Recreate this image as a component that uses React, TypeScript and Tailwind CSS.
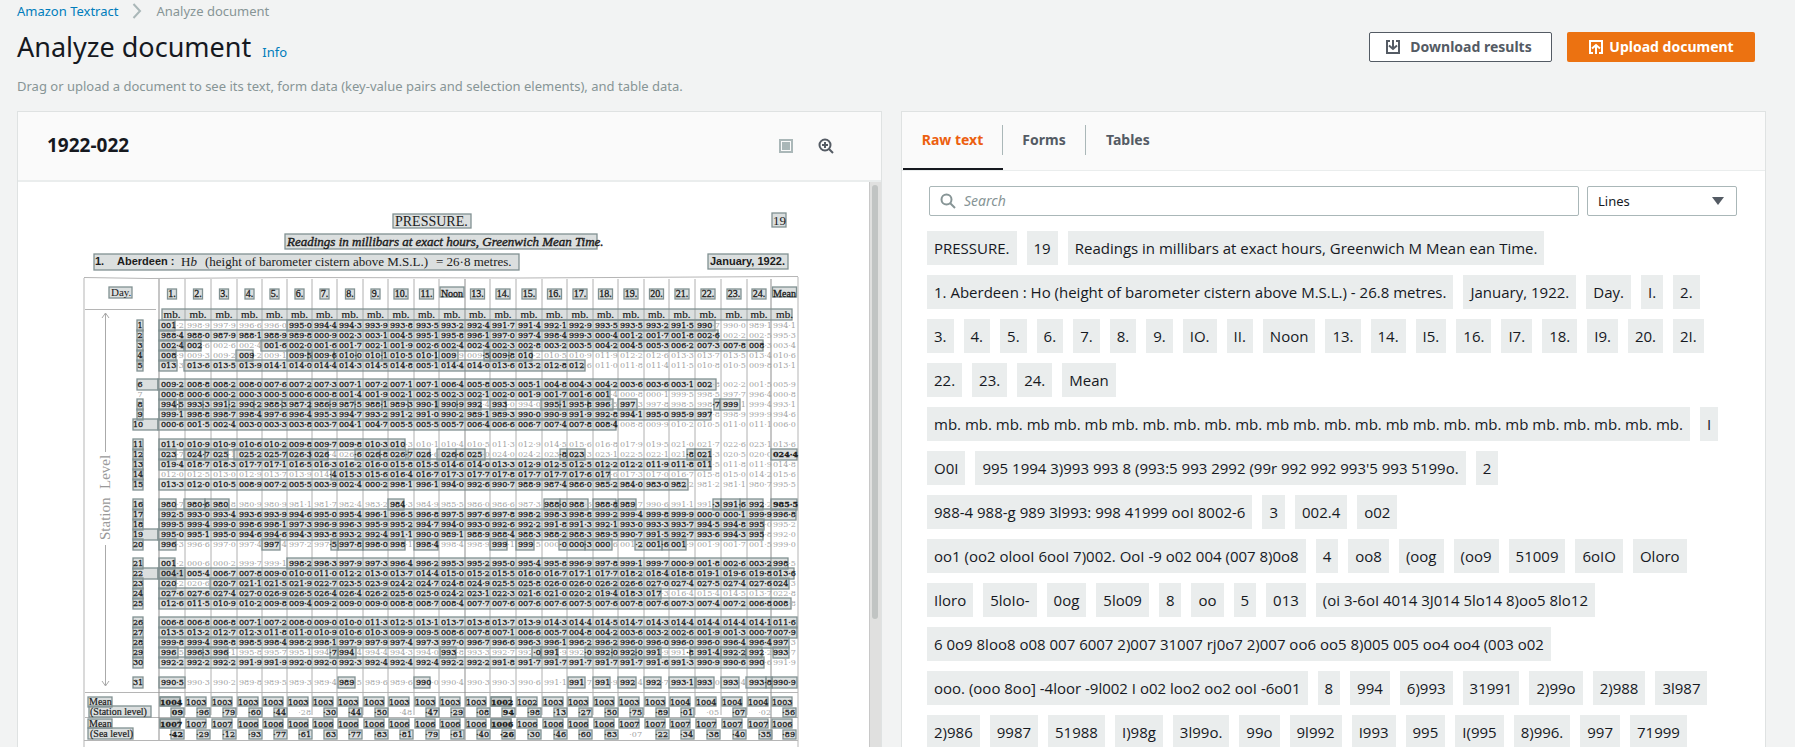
import React from "react";

const COLUMN_LINES = [
  159, 185, 211, 237, 262, 287, 312, 337, 363, 388, 414, 439, 465, 490, 516, 542, 567, 593, 618, 644, 669, 695, 721, 747,
  771, 798,
];

const HEADINGS = [
  "1.", "2.", "3.", "4.", "5.", "6.", "7.", "8.", "9.", "10.", "11.", "Noon", "13.", "14.", "15.", "16.", "17.", "18.",
  "19.", "20.", "21.", "22.", "23.", "24.", "Mean",
];

type Span = [number, number];
type Reading = { y: number; values: string; marks: Span[]; wideDay?: boolean; plainDay?: boolean };

const READINGS: Reading[] = [
  { y: 325, values: "0012 9989 9979 9966 9960 9950 9944 9943 9939 9938 9935 9932 9924 9917 9914 9921 9929 9935 9935 9932 9915 9907 9900 9891 9941", marks: [[159, 175], [287, 715]] },
  { y: 335, values: "9884 9880 9879 9881 9889 9898 0009 0023 0031 0045 9951 9958 9961 9970 9974 9984 9993 0004 0012 0017 0018 0026 0022 0025 9953", marks: [[159, 718]] },
  { y: 345, values: "0024 0026 0026 0024 0016 0020 0016 0017 0021 0019 0026 0024 0024 0023 0028 0032 0035 0042 0045 0053 0062 0073 0078 0083 0034", marks: [[159, 184], [185, 201], [261, 763]] },
  { y: 355, values: "0089 0093 0092 0092 0091 0095 0096 0100 0101 0105 0101 0099 0095 0098 0102 0105 0109 0119 0122 0126 0133 0137 0135 0134 0106", marks: [[159, 176], [236, 253], [287, 308], [308, 312], [312, 334], [334, 356], [356, 382], [382, 436], [439, 458], [484, 490], [490, 509], [509, 532]] },
  { y: 365, values: "0133 0136 0135 0139 0141 0140 0144 0143 0145 0148 0051 0144 0140 0136 0132 0128 0126 0110 0118 0114 0115 0108 0105 0098 0131", marks: [[159, 177], [184, 585]] },
  { y: 384, values: "0092 0088 0082 0080 0076 0072 0073 0071 0072 0071 0071 0064 0058 0053 0051 0048 0043 0042 0036 0036 0031 0028 0022 0015 0059", marks: [[158, 716]], wideDay: true },
  { y: 394, values: "0008 0006 0002 0003 0005 0006 0008 0014 0019 0021 0025 0023 0021 0020 0019 0017 0016 0014 0008 0001 9995 9985 9977 9964 0008", marks: [[159, 610]], plainDay: true },
  { y: 404, values: "9945 9933 9912 9902 9883 9872 9869 9875 9881 9893 9901 9909 9924 9930 9940 9951 9958 9965 9973 9978 9985 9987 9991 9994 9931", marks: [[159, 176], [179, 203], [203, 229], [229, 254], [254, 282], [282, 310], [310, 330], [330, 355], [355, 382], [382, 408], [408, 436], [438, 457], [457, 481], [490, 506], [541, 560], [560, 588], [588, 613], [618, 637], [714, 720], [720, 740]] },
  { y: 414, values: "9991 9988 9987 9984 9976 9964 9953 9947 9932 9912 9910 9902 9891 9893 9900 9909 9919 9928 9941 9950 9959 9978 9989 9999 9946", marks: [[159, 711]] },
  { y: 424, values: "0006 0015 0024 0030 0033 0038 0037 0041 0047 0055 0055 0057 0064 0066 0067 0074 0078 0084 0088 0099 0102 0105 0110 0111 0060", marks: [[158, 616]], wideDay: true },
  { y: 444, values: "0110 0109 0109 0106 0102 0098 0097 0098 0103 0103 0101 0104 0105 0113 0129 0145 0156 0168 0179 0195 0210 0217 0226 0231 0136", marks: [[159, 405]] },
  { y: 454, values: "0237 0247 0251 0252 0257 0263 0264 0266 0268 0267 0266 0266 0250 0240 0242 0238 0233 0231 0225 0221 0218 0213 0205 0200 0244", marks: [[159, 176], [184, 205], [205, 228], [234, 287], [287, 310], [310, 328], [355, 380], [380, 406], [408, 430], [437, 456], [456, 485], [560, 567], [567, 585], [687, 695], [695, 711], [771, 797]] },
  { y: 464, values: "0194 0187 0183 0177 0171 0165 0163 0162 0160 0158 0155 0146 0140 0133 0129 0125 0125 0122 0122 0119 0118 0115 0118 0119 0148", marks: [[159, 711]] },
  { y: 474, values: "0120 0125 0130 0129 0137 0139 0144 0153 0156 0164 0167 0173 0177 0178 0177 0177 0176 0176 0173 0170 0167 0158 0150 0142 0156", marks: [[331, 610]] },
  { y: 484, values: "0133 0120 0105 0089 0072 0055 0039 0024 0002 9981 9961 9940 9926 9907 9889 9874 9860 9852 9840 9830 9822 9812 9811 9807 9955", marks: [[159, 688]] },
  { y: 504, values: "9807 9806 9808 9809 9809 9811 9817 9824 9832 9843 9849 9855 9860 9866 9873 9880 9886 9888 9897 9906 9911 9913 9916 9922 9855", marks: [[159, 176], [184, 205], [205, 229], [388, 404], [544, 560], [560, 588], [593, 616], [618, 636], [713, 721], [721, 740], [740, 763], [771, 797]] },
  { y: 514, values: "9925 9930 9934 9936 9939 9946 9950 9954 9961 9965 9968 9975 9976 9978 9982 9983 9988 9992 9994 9998 9999 0000 0001 9999 9968", marks: [[159, 796]] },
  { y: 524, values: "9995 9994 9990 9986 9981 9973 9969 9963 9959 9952 9947 9940 9930 9926 9922 9918 9913 9921 9930 9933 9937 9945 9948 9950 9952", marks: [[159, 764]] },
  { y: 534, values: "9950 9951 9950 9946 9946 9943 9938 9932 9924 9911 9900 9891 9889 9884 9883 9882 9883 9895 9907 9915 9927 9936 9943 9958 9920", marks: [[158, 763]], wideDay: true },
  { y: 544, values: "9963 9966 9970 9974 9974 9972 9975 9978 9980 9981 9984 9984 9989 9991 9995 0000 0003 0006 0012 0016 0019 0019 0017 0015 9990", marks: [[159, 176], [262, 280], [331, 338], [338, 363], [363, 405], [414, 438], [490, 507], [516, 534], [559, 585], [585, 612], [635, 662], [662, 686]] },
  { y: 563, values: "0012 0006 0002 9997 9991 9982 9983 9979 9973 9964 9962 9953 9952 9950 9954 9958 9969 9978 9991 9997 0009 0018 0026 0032 9985", marks: [[159, 175], [287, 788]] },
  { y: 573, values: "0041 0054 0067 0078 0090 0100 0110 0122 0130 0137 0144 0150 0152 0155 0160 0167 0171 0177 0182 0184 0188 0191 0196 0198 0136", marks: [[158, 794], [159, 185]], wideDay: true },
  { y: 583, values: "0202 0206 0207 0211 0215 0219 0227 0235 0239 0242 0247 0248 0249 0255 0258 0260 0260 0262 0266 0270 0274 0275 0274 0276 0243", marks: [[159, 176], [210, 789]] },
  { y: 593, values: "0276 0276 0274 0270 0269 0265 0264 0264 0262 0256 0250 0242 0231 0223 0216 0210 0202 0194 0183 0173 0164 0154 0145 0137 0228", marks: [[159, 661]] },
  { y: 603, values: "0126 0115 0109 0102 0098 0094 0092 0090 0090 0088 0087 0084 0077 0076 0076 0076 0075 0076 0078 0076 0073 0074 0072 0068 0088", marks: [[159, 791]] },
  { y: 622, values: "0068 0068 0068 0071 0072 0080 0090 0100 0113 0125 0131 0137 0138 0137 0139 0143 0144 0145 0147 0143 0144 0144 0144 0141 0116", marks: [[159, 797]] },
  { y: 632, values: "0135 0132 0127 0123 0118 0110 0109 0106 0103 0099 0095 0086 0078 0071 0066 0057 0048 0042 0036 0032 0026 0019 0013 0007 0079", marks: [[159, 797]] },
  { y: 642, values: "9998 9994 9988 9985 9984 9982 9981 9979 9979 9974 9973 9970 9967 9966 9963 9961 9962 9962 9960 9960 9960 9960 9964 9964 9973", marks: [[159, 789]] },
  { y: 652, values: "9965 9963 9961 9958 9957 9951 9947 9944 9944 9943 9940 9938 9933 9927 9920 9919 9920 9920 9920 9919 9918 9914 9922 9922 9937", marks: [[159, 178], [185, 203], [203, 228], [330, 338], [338, 356], [440, 456], [532, 541], [541, 558], [585, 612], [612, 636], [636, 661], [690, 721], [721, 746], [746, 762], [773, 789]] },
  { y: 662, values: "9922 9922 9922 9919 9919 9920 9920 9923 9924 9924 9924 9922 9922 9918 9917 9917 9917 9917 9917 9916 9913 9909 9906 9906 9919", marks: [[159, 764]] },
  { y: 682, values: "9905 9903 9902 9898 9895 9893 9894 9895 9896 9896 9900 9904 9903 9903 9906 9911 9917 9919 9924 9927 9931 9930 9934 9938 9909", marks: [[159, 185], [338, 355], [414, 430], [568, 585], [593, 610], [618, 636], [644, 661], [669, 695], [696, 714], [721, 739], [746, 766], [766, 772], [772, 797]] },
];

const STATION_MEAN = "1004 1003 1003 1003 1003 1003 1003 1003 1003 1003 1003 1003 1003 1002 1002 1003 1003 1003 1003 1003 1004 1004 1004 1004 1003".split(" ");
const STATION_PART = "09 ·96 ·79 ·60 ·44 ·28 ·30 ·44 ·50 ·48 ·47 ·29 ·08 94 ·98 ·13 ·27 ·50 ·75 ·89 ·01 ·05 ·07 ·02 ·56".split(" ");
const SEA_MEAN = "1007 1007 1007 1006 1006 1006 1006 1006 1006 1006 1006 1006 1006 1006 1006 1006 1006 1006 1007 1007 1007 1007 1007 1007 1006".split(" ");
const SEA_PART = "·42 ·29 ·12 ·93 ·77 ·61 63 ·77 ·83 ·81 ·79 ·61 ·40 ·26 ·30 ·46 ·60 ·83 ·07 ·22 ·34 ·38 ·40 ·35 ·89".split(" ");

const INK = "#1c1c1c";
const FAINT = "#a3a3a3";

function Mark({ x, y, w, h }: { x: number; y: number; w: number; h: number }) {
  return <rect x={x} y={y} width={w} height={h} fill="#879596" fillOpacity="0.3" stroke="#819192" strokeWidth="1.3" />;
}

function ReadingRow({ row, day }: { row: Reading; day: number }) {
  const dayLeft = day < 10 ? 137 : 133;
  const inkAt = (from: number, to: number) => (row.marks.some(([a, b]) => a <= from && b >= to) ? INK : FAINT);
  return (
    <g fontSize="8" strokeWidth="0.3">
      {row.marks.map(([a, b], i) => (
        <Mark key={i} x={a} y={row.y - 5} w={b - a} h={11} />
      ))}
      {!row.plainDay && (
        <Mark x={dayLeft} y={row.y - 5} w={row.wideDay ? 158 - dayLeft : day < 10 ? 6 : 10} h={11} />
      )}
      <text
        x={day < 10 ? 140 : 138}
        y={row.y + 3}
        textAnchor="middle"
        fill={row.plainDay ? FAINT : INK}
        stroke={row.plainDay ? "none" : INK}
      >
        {day}
      </text>
      {row.values.split(" ").map((v, i) => {
        const left = COLUMN_LINES[i];
        const whole = inkAt(left + 8, left + 14);
        const part = inkAt(left + 21, left + 22);
        const bold = i === 24 && (day === 12 || day === 16);
        return (
          <text key={i} x={left + 2} y={row.y + 3} fontWeight={bold ? 700 : 400}>
            <tspan fill={whole} stroke={whole === INK ? INK : "none"}>{v.slice(0, 3)}</tspan>
            <tspan fill={part} stroke={part === INK ? INK : "none"}>·{v.slice(3)}</tspan>
          </text>
        );
      })}
    </g>
  );
}

function MeanRow({ y, top, bottom, skip }: { y: number; top: string[]; bottom: string[]; skip: number[] }) {
  return (
    <g>
      {top.map((v, i) => {
        const left = COLUMN_LINES[i];
        const bold = i === 0 || i === 13;
        const unmarked = skip.includes(i);
        return (
          <g key={i} fontSize="8" fontWeight={bold ? 700 : 400} fill={INK}>
            <Mark x={left + 1} y={y - 5} w={20} h={9} />
            {bold && <Mark x={left + 1} y={y - 5} w={20} h={9} />}
            <text x={left + 1} y={y + 3} stroke={INK} strokeWidth="0.3">{v}</text>
            {!unmarked && <Mark x={left + 12} y={y + 6} w={13} h={9} />}
            <text x={left + 24} y={y + 13} textAnchor="end" fill={unmarked ? FAINT : INK} stroke={unmarked ? "none" : INK} strokeWidth="0.3">
              {bottom[i]}
            </text>
          </g>
        );
      })}
    </g>
  );
}

function ScannedPage() {
  return (
    <svg
      viewBox="18 182 851 565"
      className="block w-full"
      role="img"
      aria-label="Pressure readings, January 1922"
      fontFamily='"DejaVu Serif", serif'
    >
      <g fill="none" stroke="#b5b5b5">
        <path d="M84 277.500 L150 278.500 L300 277.500 L520 278 L798 276.500" />
        <path d="M84 278V747M798 277V747" />
        <path d="M85 309.500H156M85 692.500H798M85 717.500H798M84 740.500H798" />
        {COLUMN_LINES.slice(0, -1).map((x, i) => (
          <path
            key={x}
            d={`M${x} 279V${i === 0 || i === 12 || i === 24 ? 740 : 715}`}
            stroke={i === 0 || i === 12 || i === 24 ? "#8d8d8d" : "#b0b0b0"}
          />
        ))}
        <path d="M105.500 452V313M102 318L105.500 313L109 318M105.500 545V686M102 681L105.500 686L109 681" stroke="#aaa" />
      </g>
      <g fontFamily='"Liberation Serif", serif' fill="#999" fontSize="15">
        <text transform="translate(110 540) rotate(-90)">Station</text>
        <text transform="translate(110 489) rotate(-90)">Level</text>
      </g>
      <g fontFamily='"Liberation Serif", serif' fill={INK}>
        <Mark x={393} y={214} w={78} h={14} />
        <text x="395" y="226" fontSize="14">PRESSURE.</text>
        <Mark x={772} y={213} w={14} h={14} />
        <text x="773" y="225" fontSize="13">19</text>
        <Mark x={285} y={234} w={312} h={15} />
        <text x="287" y="246" fontSize="13" fontStyle="italic" stroke={INK} strokeWidth="0.4">
          Readings in millibars at exact hours, Greenwich Mean Time.
        </text>
        <Mark x={94} y={254} w={425} h={16} />
        <text x="95" y="265" fontSize="11" fontFamily='"Liberation Sans", sans-serif' fontWeight="700">1.</text>
        <text x="117" y="265" fontSize="11" fontFamily='"Liberation Sans", sans-serif' fontWeight="700">Aberdeen :</text>
        <text x="181" y="266" fontSize="13">H<tspan fontStyle="italic">b</tspan></text>
        <text x="205" y="266" fontSize="13">(height of barometer cistern above M.S.L.)</text>
        <text x="436" y="266" fontSize="13">= 26·8 metres.</text>
        <Mark x={708} y={254} w={80} h={15} />
        <text x="710" y="265" fontSize="11" fontFamily='"Liberation Sans", sans-serif' fontWeight="700">January, 1922.</text>
        <Mark x={109} y={287} w={23} h={11} />
        <text x="111" y="296" fontSize="11">Day.</text>
      </g>
      {HEADINGS.map((h, i) => {
        const mid = (COLUMN_LINES[i] + COLUMN_LINES[i + 1]) / 2;
        const w = h.length === 2 ? 9 : h.length === 3 ? 14 : 24;
        return (
          <g key={h} fill={INK}>
            <Mark x={mid - w / 2} y={i === 11 || i === 24 ? 287 : 289} w={w} h={10} />
            <text
              x={mid}
              y="297"
              fontSize="10"
              fontFamily='"Liberation Serif", serif'
              stroke={INK}
              strokeWidth="0.3"
              textAnchor="middle"
            >
              {h}
            </text>
          </g>
        );
      })}
      <Mark x={162} y={309} w={630} h={11} />
      <g fontFamily='"Liberation Serif", serif' fontSize="11" fill={INK} stroke={INK} strokeWidth="0.2" textAnchor="middle">
        {HEADINGS.map((h, i) => (
          <text key={h} x={(COLUMN_LINES[i] + COLUMN_LINES[i + 1]) / 2} y="318">
            mb.
          </text>
        ))}
      </g>
      {READINGS.map((row, i) => (
        <ReadingRow key={row.y} row={row} day={i + 1} />
      ))}
      <MeanRow y={702} top={STATION_MEAN} bottom={STATION_PART} skip={[5, 9, 21, 23]} />
      <MeanRow y={724} top={SEA_MEAN} bottom={SEA_PART} skip={[18]} />
      <g fontFamily='"Liberation Serif", serif' fontSize="10" fill={INK} stroke={INK} strokeWidth="0.2">
        <Mark x={88} y={697} w={24} h={10} />
        <text x="89" y="705">Mean</text>
        <Mark x={89} y={706} w={62} h={11} />
        <text x="90" y="715">(Station level)</text>
        <Mark x={88} y={719} w={24} h={9} />
        <text x="89" y="727">Mean</text>
        <Mark x={88} y={728} w={45} h={11} />
        <text x="90" y="737">(Sea level)</text>
      </g>
    </svg>
  );
}

const LINES: string[][] = [
  ["PRESSURE.", "19", "Readings in millibars at exact hours, Greenwich M Mean ean Time."],
  ["1. Aberdeen : Ho (height of barometer cistern above M.S.L.) - 26.8 metres.", "January, 1922.", "Day.", "I.", "2."],
  ["3.", "4.", "5.", "6.", "7.", "8.", "9.", "IO.", "II.", "Noon", "13.", "14.", "I5.", "16.", "I7.", "18.", "I9.", "20.", "2I."],
  ["22.", "23.", "24.", "Mean"],
  ["mb. mb. mb. mb mb. mb mb. mb. mb. mb. mb. mb mb. mb. mb. mb mb. mb. mb. mb mb. mb. mb. mb. mb.", "I"],
  ["O0I", "995 1994 3)993 993 8 (993:5 993 2992 (99r 992 992 993'5 993 5199o.", "2"],
  ["988-4 988-g 989 3l993: 998 41999 ooI 8002-6", "3", "002.4", "o02"],
  ["oo1 (oo2 olooI 6ooI 7)002. OoI -9 o02 004 (007 8)0o8", "4", "oo8", "(oog", "(oo9", "51009", "6oIO", "Oloro"],
  ["Iloro", "5loIo-", "0og", "5lo09", "8", "oo", "5", "013", "(oi 3-6oI 4014 3J014 5lo14 8)oo5 8lo12"],
  ["6 0o9 8loo8 o08 007 6007 2)007 31007 rj0o7 2)007 oo6 oo5 8)005 005 oo4 oo4 (003 o02"],
  ["ooo. (ooo 8oo] -4loor -9l002 I o02 loo2 oo2 ooI -6o01", "8", "994", "6)993", "31991", "2)99o", "2)988", "3l987"],
  ["2)986", "9987", "51988", "I)98g", "3l99o.", "99o", "9l992", "I993", "995", "I(995", "8)996.", "997", "71999"],
];

function DownloadIcon() {
  return (
    <svg viewBox="0 0 16 16" className="h-4 w-4" fill="none" stroke="currentColor" strokeWidth="2" aria-hidden="true">
      <path d="M5 2H2V14H14V2H11M8 1V10M4 6.500L8 10L12 6.500" />
    </svg>
  );
}

function UploadIcon() {
  return (
    <svg viewBox="0 0 16 16" className="h-4 w-4" fill="none" stroke="currentColor" strokeWidth="2" aria-hidden="true">
      <path d="M5 14H2V2H14V14H11M8 15V6M4 9.500L8 6L12 9.500" />
    </svg>
  );
}

export default function App() {
  return (
    <div className="flex h-screen flex-col overflow-hidden bg-[#f2f3f3] pl-[17px] pr-[29px] font-['Noto_Sans',sans-serif] text-sm text-[#16191f]">
      <nav aria-label="Breadcrumb" className="flex h-[22px] items-center gap-[14px] text-[13px]">
        <a href="#textract" className="text-[#007dbc]">Amazon Textract</a>
        <svg viewBox="0 0 10 16" className="h-4 w-[10px]" fill="none" stroke="#aab7b8" strokeWidth="2" aria-hidden="true">
          <path d="M1.500 1L8 8L1.500 15" />
        </svg>
        <span className="text-[#879596]">Analyze document</span>
      </nav>

      <header className="flex items-center justify-between pr-[11px] pt-1">
        <div className="flex items-baseline gap-[11px]">
          <h1 className="text-[27px] leading-[42px]">Analyze document</h1>
          <a href="#info" className="text-[13px] text-[#007dbc]">Info</a>
        </div>
        <div className="flex gap-[15px] font-bold">
          <button className="flex h-[30px] w-[183px] items-center justify-center gap-[9px] rounded-[2px] border border-[#545b64] bg-white pr-1 text-[#545b64]">
            <DownloadIcon />
            Download results
          </button>
          <button className="flex h-[30px] w-[188px] items-center justify-center gap-[5px] rounded-[2px] bg-[#ec7211] text-white">
            <UploadIcon />
            Upload document
          </button>
        </div>
      </header>
      <p className="pb-[15px] pt-2 text-[13px] leading-5 text-[#879596]">
        Drag or upload a document to see its text, form data (key-value pairs and selection elements), and table data.
      </p>

      <main className="flex min-h-0 flex-1 gap-[19px]">
        <section className="flex min-w-0 flex-1 flex-col border-x border-t border-[#dfe2e2] bg-white">
          <div className="flex h-[70px] shrink-0 items-center justify-between border-b-2 border-[#eaeded] bg-[#fafafa] pl-[29px] pr-[47px]">
            <h2 className="text-[19px] font-bold">1922-022</h2>
            <div className="flex items-center gap-6">
              <button aria-label="Fit page">
                <svg viewBox="0 0 16 16" className="h-4 w-4" aria-hidden="true">
                  <path d="M2 2H14V14H2Z" fill="none" stroke="#aab7b8" strokeWidth="2" />
                  <path d="M4 4H12V12H4Z" fill="#aab7b8" />
                </svg>
              </button>
              <button aria-label="Zoom in">
                <svg viewBox="0 0 16 16" className="h-4 w-4" fill="none" stroke="#545b64" strokeWidth="2" aria-hidden="true">
                  <circle cx="7" cy="7" r="5.500" />
                  <path d="M11 11L15 15M7 4V10M4 7H10" />
                </svg>
              </button>
            </div>
          </div>
          <div className="flex min-h-0 flex-1">
            <div className="min-w-0 flex-1 overflow-hidden">
              <ScannedPage />
            </div>
            <div className="w-3 border-l border-[#c8c8c8] bg-[#e0e0df] px-[2px] pt-[3px]">
              <div className="h-[434px] w-[6px] rounded-full bg-[#c1c4c3]" />
            </div>
          </div>
        </section>

        <section className="flex min-w-0 flex-1 flex-col border-x border-t border-[#dfe2e2] bg-white">
          <div role="tablist" className="flex h-[59px] shrink-0 items-stretch border-b border-[#eaeded] bg-[#fafafa] pl-px font-bold text-[#545b64]">
            <button role="tab" aria-selected="true" className="flex w-[100px] items-center border-b-2 border-[#16191f] text-[#ec5f10]">
              <span className="flex h-[30px] flex-1 items-center justify-center border-r border-[#aab7b8]">Raw text</span>
            </button>
            <button role="tab" aria-selected="false" className="flex w-[83px] items-center border-b-2 border-transparent">
              <span className="flex h-[30px] flex-1 items-center justify-center border-r border-[#aab7b8]">Forms</span>
            </button>
            <button role="tab" aria-selected="false" className="flex items-center border-b-2 border-transparent px-5">Tables</button>
          </div>
          <div className="flex gap-2 pl-[27px] pr-7 pt-[15px]">
            <label className="flex h-[30px] flex-1 items-center gap-2 rounded-[2px] border border-[#aab7b8] px-[10px]">
              <svg viewBox="0 0 16 16" className="h-4 w-4" fill="none" stroke="#879596" strokeWidth="2" aria-hidden="true">
                <circle cx="6.500" cy="6.500" r="5" />
                <path d="M10 10L15 15" />
              </svg>
              <input
                type="text"
                aria-label="Search"
                placeholder="Search"
                className="min-w-0 flex-1 bg-transparent outline-none placeholder:italic placeholder:text-[#879596]"
              />
            </label>
            <div className="relative w-[150px]">
              <select aria-label="Result type" className="h-[30px] w-full appearance-none rounded-[2px] border border-[#aab7b8] bg-white px-[10px] text-[13px]">
                <option>Lines</option>
                <option>Words</option>
              </select>
              <svg viewBox="0 0 12 8" className="pointer-events-none absolute right-[13px] top-[11px] h-2 w-3" fill="#545b64" aria-hidden="true">
                <path d="M0 0H12L6 8Z" />
              </svg>
            </div>
          </div>
          <div className="flex min-h-0 flex-1 flex-col gap-[10px] overflow-hidden pl-[25px] pt-[15px] font-['Open_Sans',sans-serif] text-[15px]">
            {LINES.map((line, i) => (
              <div key={i} className="flex shrink-0 gap-[10px]">
                {line.map((text, j) => (
                  <span key={j} className="whitespace-nowrap bg-[#eaeded] px-[7px] leading-[34px]">{text}</span>
                ))}
              </div>
            ))}
          </div>
        </section>
      </main>
    </div>
  );
}
